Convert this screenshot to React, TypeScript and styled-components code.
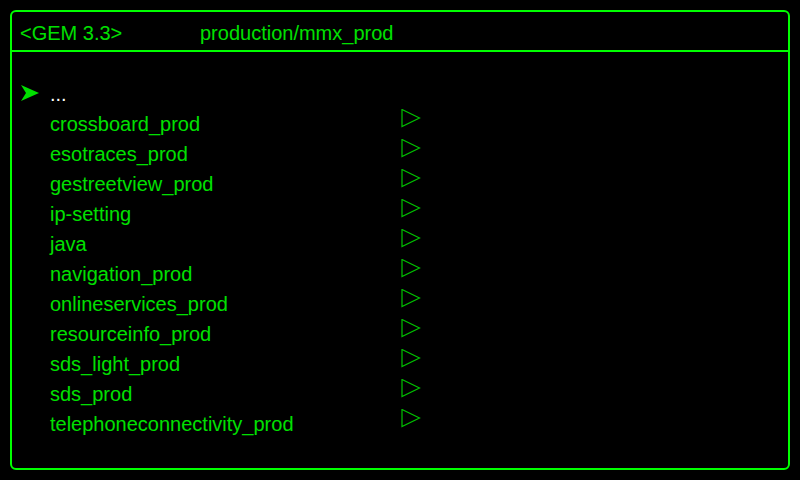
import React from 'react';
import styled, { createGlobalStyle } from 'styled-components';

const ENTRIES = [
	'crossboard_prod',
	'esotraces_prod',
	'gestreetview_prod',
	'ip-setting',
	'java',
	'navigation_prod',
	'onlineservices_prod',
	'resourceinfo_prod',
	'sds_light_prod',
	'sds_prod',
	'telephoneconnectivity_prod',
];

const GlobalStyle = createGlobalStyle`
	html, body {
		margin: 0;
		padding: 0;
		background: #000;
	}
	body {
		width: 800px;
		height: 480px;
		overflow: hidden;
		font-family: "Liberation Sans", Arial, sans-serif;
	}
`;

const Frame = styled.div`
	box-sizing: border-box;
	margin: 10px;
	width: 780px;
	height: 460px;
	border: 2px solid #00ff00;
	border-radius: 6px;
	display: flex;
	flex-direction: column;
`;

const Header = styled.div`
	height: 34px;
	border-bottom: 2px solid #00ff00;
	display: flex;
	align-items: center;
	padding: 4px 0 0 8px;
	color: #00e000;
	font-size: 20px;
`;

const Version = styled.span`
	width: 180px;
`;

const List = styled.ul`
	list-style: none;
	margin: 0;
	padding: 27px 0 0 8px;
`;

const Row = styled.li`
	height: 30px;
	display: flex;
	align-items: center;
`;

const Marker = styled.div`
	width: 30px;
	display: flex;
	align-items: center;
	padding-bottom: 2px;
`;

const Label = styled.span<{ $dim?: boolean }>`
	width: 351px;
	font-size: 20px;
	color: ${p => (p.$dim ? '#ffffff' : '#00e000')};
`;

const Play = styled.svg`
	align-self: flex-start;
	width: 20px;
	height: 20px;
`;

const Pointer = () => (
	<svg width="20" height="16" viewBox="0 0 20 16">
		<polygon points="1,0 19,8 1,16 6,8" fill="#00e000" />
	</svg>
);

const App = () => {
	return (
		<>
			<GlobalStyle />
			<Frame>
				<Header>
					<Version>&lt;GEM 3.3&gt;</Version>
					<span>production/mmx_prod</span>
				</Header>
				<List>
					<Row>
						<Marker>
							<Pointer />
						</Marker>
						<Label $dim>...</Label>
					</Row>
					{ENTRIES.map(name => (
						<Row key={name}>
							<Marker />
							<Label>{name}</Label>
							<Play viewBox="0 0 20 20">
								<polygon
									points="1,0.5 18.5,9 1,17.5"
									fill="none"
									stroke="#00c000"
									strokeWidth="1.2"
								/>
							</Play>
						</Row>
					))}
				</List>
			</Frame>
		</>
	);
};

export default App;
